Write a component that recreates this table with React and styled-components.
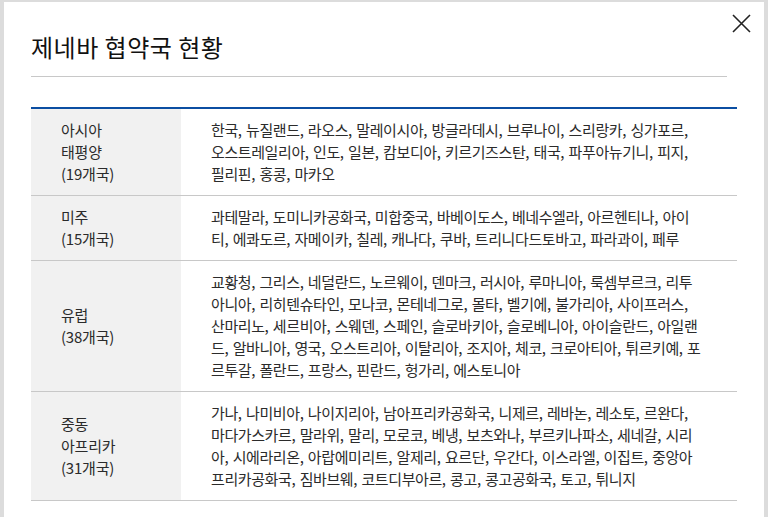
import React from 'react'
import styled, { createGlobalStyle } from 'styled-components'

const GlobalStyle = createGlobalStyle`
  html, body {
    margin: 0;
    padding: 0;
    background: #dcdcdc;
    overflow: hidden;
  }
  body {
    font-family: "Noto Sans CJK KR", "Noto Sans", sans-serif;
    color: #333;
  }
`

const Modal = styled.div`
  position: relative;
  margin: 2px 4px 0 4px;
  width: 760px;
  height: 515px;
  background: #fff;
  padding: 0 27px;
  box-sizing: border-box;
`

const Header = styled.div`
  display: flex;
  align-items: center;
  height: 75px;
  box-sizing: border-box;
  padding-top: 15px;
  margin-right: 10px;
  border-bottom: 1px solid #c8c8c8;
`

const Title = styled.h2`
  margin: 0;
  font-size: 24px;
  font-weight: 400;
  color: #111;
  letter-spacing: 0.5px;
`

const CloseButton = styled.button`
  position: absolute;
  top: 10px;
  right: 12px;
  width: 22px;
  height: 22px;
  padding: 0;
  border: 0;
  background: none;
  display: flex;
  align-items: center;
  justify-content: center;
  cursor: pointer;
`

const Table = styled.div`
  margin-top: 30px;
  border-top: 2px solid #0b4ea2;
`

const Row = styled.div`
  display: grid;
  grid-template-columns: 150px 1fr;
  border-bottom: 1px solid #c8c8c8;
`

const Region = styled.div`
  background: #f1f1f1;
  padding: 10px 30px;
  display: flex;
  flex-direction: column;
  justify-content: center;
  font-size: 15px;
  line-height: 22px;
  letter-spacing: -0.2px;
  color: #2b2b2b;
`

const Countries = styled.div`
  padding: 10px 20px 10px 30px;
  font-size: 15px;
  line-height: 22px;
  letter-spacing: -0.4px;
  word-spacing: 1.5px;
  color: #2b2b2b;
`

const Line = styled.div`
  white-space: nowrap;
`

const data = [
  {
    region: ['아시아', '태평양', '(19개국)'],
    lines: [
      '한국, 뉴질랜드, 라오스, 말레이시아, 방글라데시, 브루나이, 스리랑카, 싱가포르,',
      '오스트레일리아, 인도, 일본, 캄보디아, 키르기즈스탄, 태국, 파푸아뉴기니, 피지,',
      '필리핀, 홍콩, 마카오'
    ]
  },
  {
    region: ['미주', '(15개국)'],
    lines: [
      '과테말라, 도미니카공화국, 미합중국, 바베이도스, 베네수엘라, 아르헨티나, 아이',
      '티, 에콰도르, 자메이카, 칠레, 캐나다, 쿠바, 트리니다드토바고, 파라과이, 페루'
    ]
  },
  {
    region: ['유럽', '(38개국)'],
    lines: [
      '교황청, 그리스, 네덜란드, 노르웨이, 덴마크, 러시아, 루마니아, 룩셈부르크, 리투',
      '아니아, 리히텐슈타인, 모나코, 몬테네그로, 몰타, 벨기에, 불가리아, 사이프러스,',
      '산마리노, 세르비아, 스웨덴, 스페인, 슬로바키아, 슬로베니아, 아이슬란드, 아일랜',
      '드, 알바니아, 영국, 오스트리아, 이탈리아, 조지아, 체코, 크로아티아, 튀르키예, 포',
      '르투갈, 폴란드, 프랑스, 핀란드, 헝가리, 에스토니아'
    ]
  },
  {
    region: ['중동', '아프리카', '(31개국)'],
    lines: [
      '가나, 나미비아, 나이지리아, 남아프리카공화국, 니제르, 레바논, 레소토, 르완다,',
      '마다가스카르, 말라위, 말리, 모로코, 베냉, 보츠와나, 부르키나파소, 세네갈, 시리',
      '아, 시에라리온, 아랍에미리트, 알제리, 요르단, 우간다, 이스라엘, 이집트, 중앙아',
      '프리카공화국, 짐바브웨, 코트디부아르, 콩고, 콩고공화국, 토고, 튀니지'
    ]
  }
]

const CloseIcon = () => (
  <svg width='19' height='19' viewBox='0 0 19 19'>
    <path d='M1 1 L18 18 M18 1 L1 18' stroke='#222' strokeWidth='1.6' fill='none' />
  </svg>
)

export default function App () {
  return (
    <>
      <GlobalStyle />
      <Modal>
        <Header>
          <Title>제네바 협약국 현황</Title>
        </Header>
        <CloseButton aria-label='닫기'>
          <CloseIcon />
        </CloseButton>
        <Table>
          {data.map((item) => (
            <Row key={item.region[0]}>
              <Region>
                {item.region.map((line) => <span key={line}>{line}</span>)}
              </Region>
              <Countries>
                {item.lines.map((line, i) => <Line key={i}>{line}</Line>)}
              </Countries>
            </Row>
          ))}
        </Table>
      </Modal>
    </>
  )
}
